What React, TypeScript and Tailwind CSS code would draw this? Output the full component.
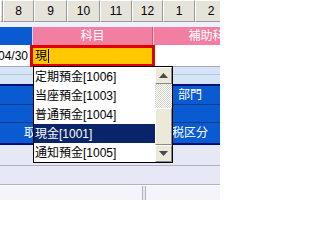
import React from "react";

const headerCells: { w: string; label: string }[] = [
  { w: "w-[3px]", label: "" },
  { w: "w-[31px]", label: "8" },
  { w: "w-[33px]", label: "9" },
  { w: "w-[33px]", label: "10" },
  { w: "w-[32px]", label: "11" },
  { w: "w-[31px]", label: "12" },
  { w: "w-[32px]", label: "1" },
  { w: "w-[32px]", label: "2" },
];

const items = [
  { t: "定期預金[1006]", sel: false },
  { t: "当座預金[1003]", sel: false },
  { t: "普通預金[1004]", sel: false },
  { t: "現金[1001]", sel: true },
  { t: "通知預金[1005]", sel: false },
];

function Arrow({ up }: { up: boolean }) {
  return (
    <svg width="9" height="5" viewBox="0 0 9 5">
      {up ? (
        <polygon points="4.5,0 9,5 0,5" fill="#4a4a4a" />
      ) : (
        <polygon points="0,0 9,0 4.5,5" fill="#4a4a4a" />
      )}
    </svg>
  );
}

export default function App() {
  return (
    <div className="relative w-[220px] h-[200px] overflow-hidden bg-[#e8eaf6] font-['Liberation_Sans','Noto_Sans_CJK_JP',sans-serif] text-[12px] leading-none">
      {/* column number header */}
      <div className="flex h-[22px] shrink-0">
        {headerCells.map((c, i) => (
          <div
            key={i}
            className={`${c.w} shrink-0 h-full flex items-center justify-center bg-[#e6e4da] border-l border-t border-white border-r border-b border-r-[#9a9a9a] border-b-[#9a9a9a] text-[12px] text-black`}
          >
            {c.label}
          </div>
        ))}
      </div>
      {/* gap */}
      <div className="h-[5px] bg-[#eef0fb]" />
      {/* pink title row */}
      <div className="flex h-[18px]">
        <div className="w-[33px] shrink-0 bg-[#0a5ad2] border-r border-[#c8d8f0]" />
        <div className="w-[120px] shrink-0 bg-[#f27ea2] border-r border-[#c95c80] flex items-center justify-center text-white text-[12px]">
          科目
        </div>
        <div className="w-[118px] shrink-0 bg-[#f27ea2] border-l border-[#fbc4d4] flex items-center justify-center text-white text-[12px]">
          補助科目
        </div>
      </div>
      {/* input row */}
      <div className="flex h-[22px]">
        <div className="w-[30px] shrink-0 bg-white border-b border-[#a8a8b8] flex items-center justify-end pr-[2px] text-black text-[12px] overflow-hidden whitespace-nowrap">
          04/30
        </div>
        <div className="w-[125px] shrink-0 border-[3px] border-[#e00000] bg-[#ffc800] flex items-center pl-[2px] text-black text-[12px]">
          <span>現</span>
          <span className="ml-[1px] w-px h-[14px] bg-black" />
        </div>
        <div className="flex-1 bg-white border-b border-[#a8a8b8]" />
      </div>
      {/* light band */}
      <div className="h-[8px] bg-[#d6e4f8] border-b border-[#b4c4de]" />
      <div className="h-[9px] bg-[#d6e4f8]" />
      {/* navy line */}
      <div className="h-[2px] bg-[#00107a]" />
      {/* blue rows */}
      <div className="flex h-[19px] bg-[#0a5ad2] border-b border-[#123c8c]">
        <div className="w-[178px] shrink-0" />
        <div className="flex items-center text-white text-[12px]">部門</div>
      </div>
      <div className="h-[18px] bg-[#0a5ad2] border-b border-[#123c8c]" />
      <div className="flex h-[20px] bg-[#0a5ad2]">
        <div className="w-[172px] shrink-0 flex items-center pl-[24px] text-white text-[12px]">
          取
        </div>
        <div className="flex items-center text-white text-[12px]">税区分</div>
      </div>
      <div className="h-[2px] bg-[#00107a]" />
      {/* lower rows */}
      <div className="h-[21px] bg-[#e6e8f6] border-b border-[#b0b0c4]" />
      <div className="h-[19px] bg-[#e6e8f6] border-b border-[#b0b0c4]" />
      <div className="flex h-[20px] border-t border-white">
        <div className="w-[143px] shrink-0 bg-[#f4f5fb] border-r border-[#b0b0c4]" />
        <div className="w-[2px] shrink-0 bg-[#e6e8f6]" />
        <div className="flex-1 bg-[#f4f5fb] border-l border-[#b0b0c4]" />
      </div>

      {/* dropdown list */}
      <div className="absolute left-[33px] top-[66px] w-[140px] h-[97px] border border-black bg-white flex">
        <div className="w-[121px] flex flex-col">
          {items.map((it, i) => (
            <div
              key={i}
              className={`h-[19px] flex items-center pl-[1px] text-[12px] ${
                it.sel ? "bg-[#0a246a] text-white" : "text-black"
              }`}
            >
              {it.t}
            </div>
          ))}
        </div>
        <div className="w-[17px] flex flex-col">
          <div className="h-[17px] shrink-0 bg-[#ece9d8] border border-t-white border-l-white border-r-[#8a8a8a] border-b-[#8a8a8a] flex items-center justify-center">
            <Arrow up />
          </div>
          <div className="h-[24px] shrink-0 bg-[repeating-conic-gradient(#d6d3c8_0%_25%,#ffffff_0%_50%)] bg-[length:2px_2px]" />
          <div className="h-[37px] shrink-0 bg-[#ece9d8] border border-t-white border-l-white border-r-[#8a8a8a] border-b-[#8a8a8a]" />
          <div className="h-[17px] shrink-0 bg-[#ece9d8] border border-t-white border-l-white border-r-[#8a8a8a] border-b-[#8a8a8a] flex items-center justify-center">
            <Arrow up={false} />
          </div>
        </div>
      </div>
    </div>
  );
}
